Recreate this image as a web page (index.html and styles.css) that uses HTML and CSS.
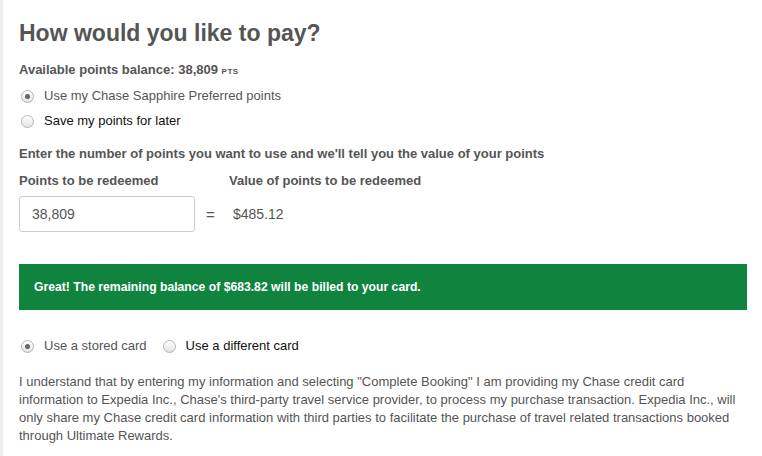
FILE: index.html
```html
<!DOCTYPE html>
<html lang="en">
<head>
    <meta charset="UTF-8">
    <title>How would you like to pay?</title>
    <link rel="stylesheet" href="styles.css">
</head>
<body>

    <div class="payment">
        <h1 class="title">How would you like to pay?</h1>
        <p class="balance">Available points balance: 38,809 <span class="pts">PTS</span></p>

        <div class="radio-list">
            <label class="radio">
                <input type="radio" name="points" checked>
                <span>Use my Chase Sapphire Preferred points</span>
            </label>
            <label class="radio">
                <input type="radio" name="points">
                <span class="dark">Save my points for later</span>
            </label>
        </div>

        <p class="instructions">Enter the number of points you want to use and we'll tell you the value of your points</p>

        <div class="redeem">
            <div class="redeem-label">Points to be redeemed</div>
            <div></div>
            <div class="redeem-label">Value of points to be redeemed</div>
            <input class="points-input" type="text" value="38,809">
            <div class="equals">=</div>
            <div class="value">$485.12</div>
        </div>

        <div class="notice">Great! The remaining balance of $683.82 will be billed to your card.</div>

        <div class="card-options">
            <label class="radio">
                <input type="radio" name="card" checked>
                <span>Use a stored card</span>
            </label>
            <label class="radio">
                <input type="radio" name="card">
                <span class="dark">Use a different card</span>
            </label>
        </div>

        <p class="disclaimer">I understand that by entering my information and selecting "Complete Booking" I am providing my Chase credit card information to Expedia Inc., Chase's third-party travel service provider, to process my purchase transaction. Expedia Inc., will only share my Chase credit card information with third parties to facilitate the purchase of travel related transactions booked through Ultimate Rewards.</p>
    </div>

</body>
</html>
```

FILE: styles.css
```css
* {
    margin: 0;
    padding: 0;
    box-sizing: border-box;
}

body {
    background-color: #FFFFFF;
    color: #555555;
    font-family: 'Liberation Sans', Arial, sans-serif;
    font-size: 13px;
}

.payment {
    border-left: 3px solid #EEEEEE;
    padding: 19px 15px 0 16px;
    min-height: 456px;
}

.title {
    font-size: 23px;
    line-height: 28px;
    color: #555555;
    font-weight: bold;
}

.balance {
    margin-top: 14px;
    font-weight: bold;
    line-height: 18px;
}

.pts {
    font-size: 8px;
    letter-spacing: 0.5px;
}

.radio-list {
    margin-top: 6px;
    display: flex;
    flex-direction: column;
    gap: 7px;
}

.radio {
    display: flex;
    align-items: center;
    gap: 10px;
    line-height: 18px;
    padding-left: 2px;
    cursor: pointer;
}

.radio input {
    appearance: none;
    width: 13px;
    height: 13px;
    border-radius: 50%;
    border: 1px solid #B5B5B5;
    background: linear-gradient(#FFFFFF, #E3E3E3);
    display: flex;
    align-items: center;
    justify-content: center;
}

.radio input:checked::after {
    content: '';
    width: 5px;
    height: 5px;
    border-radius: 50%;
    background-color: #666666;
}

.radio .dark {
    color: #111111;
}

.instructions {
    margin-top: 15px;
    font-weight: bold;
    line-height: 18px;
}

.redeem {
    margin-top: 9px;
    display: grid;
    grid-template-columns: 176px 34px auto;
    row-gap: 6px;
    align-items: center;
}

.redeem-label {
    font-weight: bold;
    line-height: 18px;
}

.points-input {
    height: 36px;
    border: 1px solid #CCCCCC;
    border-radius: 3px;
    padding: 0 12px;
    font-family: inherit;
    font-size: 14px;
    color: #555555;
}

.equals {
    font-size: 15px;
    padding-left: 11px;
}

.value {
    font-size: 14px;
    padding-left: 4px;
}

.notice {
    margin-top: 32px;
    background-color: #10833F;
    color: #FFFFFF;
    font-weight: bold;
    font-size: 12.2px;
    padding: 14px 15px;
    line-height: 18px;
}

.card-options {
    margin-top: 27px;
    display: flex;
    gap: 14px;
}

.disclaimer {
    margin-top: 18px;
    line-height: 18px;
}
```
